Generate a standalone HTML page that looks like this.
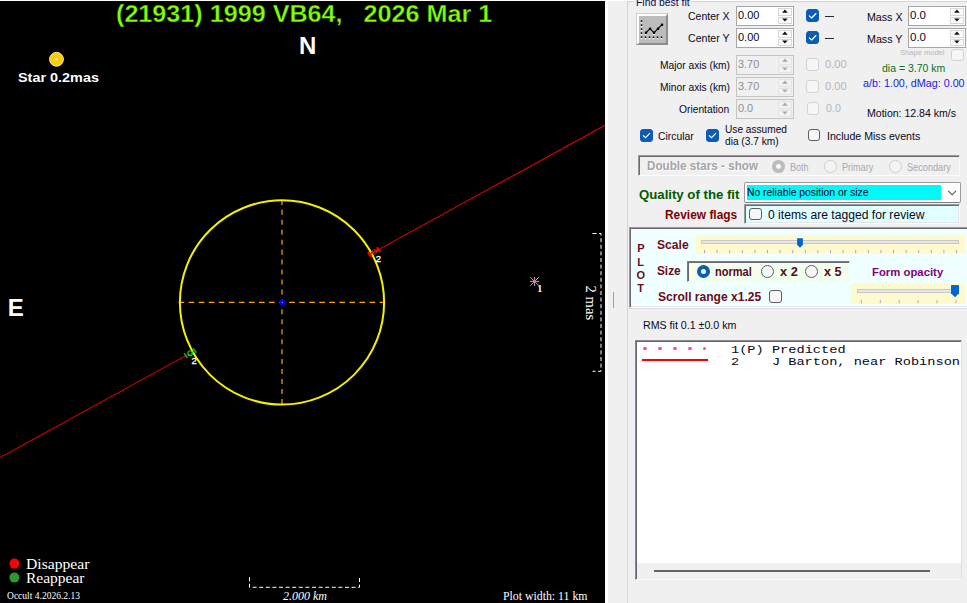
<!DOCTYPE html>
<html><head><meta charset="utf-8"><title>Occult asteroid plot</title>
<style>
html,body{margin:0;padding:0;}
body{width:967px;height:603px;overflow:hidden;position:relative;background:#f0f0f0;font-family:"Liberation Sans",sans-serif;}
.t{position:absolute;white-space:pre;line-height:normal;}
.a{position:absolute;box-sizing:border-box;}
#plot{position:absolute;left:0;top:0;}
.num{background:#fff;border:1px solid #a6a6aa;}
.num.dis{background:#f0f0f0;border-color:#c4c4c4;}
.spin{position:absolute;right:0;top:0;bottom:0;width:16px;background:#f3f3f3;border-left:1px solid #e0e0e0;}
.cb{border:1px solid #5c5c64;border-radius:3px;background:#f7f7f7;}
.cb.on{background:#0a5cb4;border-color:#0a5cb4;}
.cb.dis{border-color:#d2d2d2;background:#f6f6f6;}
.rb{border:1px solid #606068;border-radius:50%;background:#f6f6f6;}
.rb.dis{border-color:#cfcfcf;background:#f4f4f4;}

</style></head>
<body>
<svg id="plot" width="608" height="603" viewBox="0 0 608 603">
  <rect x="0" y="0" width="608" height="603" fill="#fff"/>
  <rect x="0" y="1" width="605" height="602" fill="#000"/>
  <!-- chord line -->
  <line x1="0" y1="457.6" x2="188.6" y2="354.1" stroke="#e40000" stroke-width="1.05"/>
  <line x1="379" y1="249.4" x2="605" y2="125.3" stroke="#e40000" stroke-width="1.05"/>
  <!-- axes -->
  <line x1="282" y1="199.9" x2="282" y2="405" stroke="#b07808" stroke-width="1.7" stroke-dasharray="5 4.95"/>
  <line x1="178.6" y1="302.4" x2="385" y2="302.4" stroke="#ffa800" stroke-width="1.2" stroke-dasharray="5.6 4.45"/>
  <!-- circle -->
  <circle cx="282" cy="302.4" r="102.1" fill="none" stroke="#f4f000" stroke-width="2"/>
  <circle cx="282.3" cy="302.4" r="2.9" fill="#0000ff"/>
  <circle cx="282.3" cy="302.4" r="0.8" fill="#8060c0"/>
  <!-- D event -->
  <g stroke="#ff0000" stroke-width="2" fill="none">
    <line x1="369.9" y1="254.1" x2="378.5" y2="249.7"/>
    <line x1="367.9" y1="252.1" x2="371.4" y2="256.9"/>
    <line x1="376.9" y1="247.3" x2="380.3" y2="252.3"/>
  </g>
  <circle cx="374.4" cy="251.9" r="2.4" fill="none" stroke="#a06858" stroke-width="1" stroke-dasharray="1.2 0.8"/>
  <!-- R event -->
  <g stroke="#10a02c" stroke-width="1.7" fill="none">
    <line x1="184.1" y1="353.2" x2="187.5" y2="358"/>
    <line x1="193.1" y1="348.3" x2="196.3" y2="352.7"/>
  </g>
  <line x1="188.5" y1="355.3" x2="194.5" y2="351" stroke="#10a02c" stroke-width="1"/>
  <circle cx="190.2" cy="353.3" r="2.3" fill="none" stroke="#00d828" stroke-width="1.1"/>
  <!-- predicted star marker -->
  <g stroke="#c8c8c8" stroke-width="0.9">
    <line x1="530" y1="281.4" x2="539.2" y2="281.4"/>
    <line x1="534.6" y1="276.8" x2="534.6" y2="286"/>
    <line x1="530.3" y1="277.1" x2="538.9" y2="285.7"/>
    <line x1="530.3" y1="285.7" x2="538.9" y2="277.1"/>
  </g>
  <circle cx="534.6" cy="281.4" r="1.7" fill="#ff60b0"/>
  <!-- star -->
  <circle cx="56.5" cy="59.3" r="6.9" fill="#ffcc00" stroke="#fff2c0" stroke-width="1"/>
  <circle cx="56.5" cy="59.3" r="1.3" fill="#fff"/>
  <!-- legend dots -->
  <circle cx="14.4" cy="563.6" r="5" fill="#ff0000"/>
  <circle cx="14.4" cy="577.6" r="5" fill="#2e962e"/>
  <!-- km scale -->
  <path d="M249.5 577.2 V587.3 H359.5 V577.2" fill="none" stroke="#fff" stroke-width="1" stroke-dasharray="4 2.6"/>
  <!-- mas scale -->
  <path d="M592.5 233.5 H601 V371.3 H592.5" fill="none" stroke="#fff" stroke-width="1" stroke-dasharray="4 2.6"/>
  <text x="0" y="0" transform="translate(586.2,285.6) rotate(90)" font-family="Liberation Serif, serif" font-size="15" textLength="34.6" lengthAdjust="spacingAndGlyphs" fill="#fff">2 mas</text>
</svg>
<!-- ===== panel ===== -->
<div class="a" style="left:0;top:0;width:967px;height:1px;background:#fff"></div>
<!-- groupbox border -->
<div class="a" style="left:627px;top:1px;width:345px;height:330px;border:1px solid #d4d4d4;border-bottom:none"></div>
<div class="a" style="left:627px;top:331px;width:1px;height:272px;background:#d8d8d8"></div>
<div class="a" style="left:634px;top:0;width:57px;height:8px;background:#f0f0f0"></div>
<div class="a" style="left:613px;top:292px;width:1px;height:16px;background:#a0a0a0"></div>
<!-- fit button -->
<div class="a" id="fitbtn" style="left:636px;top:13px;width:32px;height:32px;background:#bcbcbc;border-top:3px solid #fff;border-left:3px solid #fff;border-right:2px solid #8a8a8a;border-bottom:2px solid #8a8a8a;outline:1px solid rgba(150,150,150,.45);outline-offset:-1px">
<svg width="28" height="28" viewBox="0 0 28 28" style="position:absolute;left:-1px;top:-1px">
 <g fill="#fff"><rect x="2.8" y="6.7" width="1.5" height="1.5"/><rect x="2.8" y="10.7" width="1.5" height="1.5"/><rect x="2.8" y="14.7" width="1.5" height="1.5"/><rect x="2.8" y="18.7" width="1.5" height="1.5"/><rect x="2.8" y="22.7" width="1.5" height="1.5"/><rect x="6.8" y="22.8" width="1.5" height="1.5"/><rect x="10.8" y="22.8" width="1.5" height="1.5"/><rect x="14.8" y="22.8" width="1.5" height="1.5"/><rect x="18.8" y="22.8" width="1.5" height="1.5"/><rect x="22.8" y="22.8" width="1.5" height="1.5"/><rect x="6.9" y="18.3" width="2.3" height="1.6"/><rect x="14.9" y="18.3" width="2.3" height="1.6"/></g>
 <g fill="#000"><rect x="2.8" y="5.4" width="1.5" height="1.5"/><rect x="2.8" y="9.4" width="1.5" height="1.5"/><rect x="2.8" y="13.4" width="1.5" height="1.5"/><rect x="2.8" y="17.4" width="1.5" height="1.5"/><rect x="2.8" y="21.4" width="1.5" height="1.5"/><rect x="6.8" y="21.5" width="1.5" height="1.5"/><rect x="10.8" y="21.5" width="1.5" height="1.5"/><rect x="14.8" y="21.5" width="1.5" height="1.5"/><rect x="18.8" y="21.5" width="1.5" height="1.5"/><rect x="22.8" y="21.5" width="1.5" height="1.5"/></g>
 <polyline points="8,17.7 12,13.7 16,17.7 20,13.7 24,9.7" fill="none" stroke="#000" stroke-width="1.1"/>
 <g fill="#000"><rect x="6.9" y="16.6" width="2.3" height="2.3"/><rect x="10.9" y="12.6" width="2.3" height="2.3"/><rect x="14.9" y="16.6" width="2.3" height="2.3"/><rect x="18.9" y="12.6" width="2.3" height="2.3"/><rect x="22.9" y="8.6" width="2.3" height="2.3"/></g>
</svg></div>
<div class="a num" style="left:736px;top:6px;width:58px;height:19.5px"><div class="a" style="left:40.8px;top:1.2px;width:14.4px;height:7.8px;background:#fcfcfc;border:1px solid #d8d8d8"></div><div class="a" style="left:40.8px;top:9.6px;width:14.4px;height:7.5px;background:#fcfcfc;border:1px solid #d8d8d8"></div><svg class="a" style="left:43.8px;top:-1px" width="8" height="19.5" viewBox="0 0 8 19.5"><path d="M1.1 6.73 L6.7 6.73 L3.9 3.53 Z M1.1 12.38 L6.7 12.38 L3.9 15.58 Z" fill="#101010"/></svg></div>
<div class="a num" style="left:736px;top:28px;width:58px;height:19.5px"><div class="a" style="left:40.8px;top:1.2px;width:14.4px;height:7.8px;background:#fcfcfc;border:1px solid #d8d8d8"></div><div class="a" style="left:40.8px;top:9.6px;width:14.4px;height:7.5px;background:#fcfcfc;border:1px solid #d8d8d8"></div><svg class="a" style="left:43.8px;top:-1px" width="8" height="19.5" viewBox="0 0 8 19.5"><path d="M1.1 6.73 L6.7 6.73 L3.9 3.53 Z M1.1 12.38 L6.7 12.38 L3.9 15.58 Z" fill="#101010"/></svg></div>
<div class="a num dis" style="left:736px;top:55px;width:58px;height:19.5px"><div class="a" style="left:40.8px;top:1.2px;width:14.4px;height:7.8px;background:#f2f2f2;border:1px solid #e4e4e4"></div><div class="a" style="left:40.8px;top:9.6px;width:14.4px;height:7.5px;background:#f2f2f2;border:1px solid #e4e4e4"></div><svg class="a" style="left:43.8px;top:-1px" width="8" height="19.5" viewBox="0 0 8 19.5"><path d="M1.1 6.73 L6.7 6.73 L3.9 3.53 Z M1.1 12.38 L6.7 12.38 L3.9 15.58 Z" fill="#a8a8a8"/></svg></div>
<div class="a num dis" style="left:736px;top:77px;width:58px;height:19.5px"><div class="a" style="left:40.8px;top:1.2px;width:14.4px;height:7.8px;background:#f2f2f2;border:1px solid #e4e4e4"></div><div class="a" style="left:40.8px;top:9.6px;width:14.4px;height:7.5px;background:#f2f2f2;border:1px solid #e4e4e4"></div><svg class="a" style="left:43.8px;top:-1px" width="8" height="19.5" viewBox="0 0 8 19.5"><path d="M1.1 6.73 L6.7 6.73 L3.9 3.53 Z M1.1 12.38 L6.7 12.38 L3.9 15.58 Z" fill="#a8a8a8"/></svg></div>
<div class="a num dis" style="left:736px;top:99px;width:58px;height:19.5px"><div class="a" style="left:40.8px;top:1.2px;width:14.4px;height:7.8px;background:#f2f2f2;border:1px solid #e4e4e4"></div><div class="a" style="left:40.8px;top:9.6px;width:14.4px;height:7.5px;background:#f2f2f2;border:1px solid #e4e4e4"></div><svg class="a" style="left:43.8px;top:-1px" width="8" height="19.5" viewBox="0 0 8 19.5"><path d="M1.1 6.73 L6.7 6.73 L3.9 3.53 Z M1.1 12.38 L6.7 12.38 L3.9 15.58 Z" fill="#a8a8a8"/></svg></div>
<div class="a num" style="left:908px;top:6px;width:58px;height:19.5px"><div class="a" style="left:40.8px;top:1.2px;width:14.4px;height:7.8px;background:#fcfcfc;border:1px solid #d8d8d8"></div><div class="a" style="left:40.8px;top:9.6px;width:14.4px;height:7.5px;background:#fcfcfc;border:1px solid #d8d8d8"></div><svg class="a" style="left:43.8px;top:-1px" width="8" height="19.5" viewBox="0 0 8 19.5"><path d="M1.1 6.73 L6.7 6.73 L3.9 3.53 Z M1.1 12.38 L6.7 12.38 L3.9 15.58 Z" fill="#101010"/></svg></div>
<div class="a num" style="left:908px;top:28px;width:58px;height:19.5px"><div class="a" style="left:40.8px;top:1.2px;width:14.4px;height:7.8px;background:#fcfcfc;border:1px solid #d8d8d8"></div><div class="a" style="left:40.8px;top:9.6px;width:14.4px;height:7.5px;background:#fcfcfc;border:1px solid #d8d8d8"></div><svg class="a" style="left:43.8px;top:-1px" width="8" height="19.5" viewBox="0 0 8 19.5"><path d="M1.1 6.73 L6.7 6.73 L3.9 3.53 Z M1.1 12.38 L6.7 12.38 L3.9 15.58 Z" fill="#101010"/></svg></div>
<div class="a" style="left:825.3px;top:15.8px;width:8.3px;height:1.1px;background:#282830"></div>
<div class="a" style="left:825.3px;top:37.8px;width:8.3px;height:1.1px;background:#282830"></div>
<div class="a cb on" style="left:806px;top:9px;width:13px;height:13px"><svg class="a" style="left:-1px;top:-1px" width="13" height="13" viewBox="0 0 13 13"><path d="M3.3 6.8 L5.7 9 L9.9 4.5" fill="none" stroke="#fff" stroke-width="1.15" stroke-linecap="round" stroke-linejoin="round"/></svg></div>
<div class="a cb on" style="left:806px;top:31px;width:13px;height:13px"><svg class="a" style="left:-1px;top:-1px" width="13" height="13" viewBox="0 0 13 13"><path d="M3.3 6.8 L5.7 9 L9.9 4.5" fill="none" stroke="#fff" stroke-width="1.15" stroke-linecap="round" stroke-linejoin="round"/></svg></div>
<div class="a cb dis" style="left:806.3px;top:58.4px;width:12.6px;height:12.4px"></div>
<div class="a cb dis" style="left:806.3px;top:80.4px;width:12.6px;height:12.4px"></div>
<div class="a cb dis" style="left:806.5px;top:102.4px;width:12.6px;height:12.4px"></div>
<div class="a cb dis" style="left:951.3px;top:49px;width:12.6px;height:11.6px"></div>
<div class="a cb on" style="left:640px;top:129.3px;width:12.8px;height:12.6px"><svg class="a" style="left:-1px;top:-1px" width="12.8" height="12.6" viewBox="0 0 13 13"><path d="M3.3 6.8 L5.7 9 L9.9 4.5" fill="none" stroke="#fff" stroke-width="1.15" stroke-linecap="round" stroke-linejoin="round"/></svg></div>
<div class="a cb on" style="left:706.2px;top:129.3px;width:12.8px;height:12.6px"><svg class="a" style="left:-1px;top:-1px" width="12.8" height="12.6" viewBox="0 0 13 13"><path d="M3.3 6.8 L5.7 9 L9.9 4.5" fill="none" stroke="#fff" stroke-width="1.15" stroke-linecap="round" stroke-linejoin="round"/></svg></div>
<div class="a cb" style="left:808.1px;top:129.4px;width:12.4px;height:12px"></div>
<div class="a" style="left:638.4px;top:155.4px;width:321.8px;height:20.4px;border-top:1px solid #9a9a9e;border-left:1px solid #9a9a9e;border-right:1px solid #fcfcfc;border-bottom:1px solid #fcfcfc;box-shadow:inset 1px 1px 0 #6e6672"></div>
<div class="a" style="left:772.1px;top:160.1px;width:12.8px;height:12.8px;border-radius:50%;background:#bcbcbc"></div>
<div class="a" style="left:776.1px;top:164.1px;width:4.8px;height:4.8px;border-radius:50%;background:#fafafa"></div>
<div class="a rb dis" style="left:824.1px;top:160.2px;width:12.6px;height:12.6px"></div>
<div class="a rb dis" style="left:889.1px;top:160.2px;width:12.6px;height:12.6px"></div>
<div class="a" style="left:744.2px;top:182.2px;width:216.5px;height:20.6px;background:#fff;border:1px solid #9a9aa0;border-bottom-color:#7c7c84;border-radius:2px"></div>
<div class="a" style="left:747.1px;top:184.9px;width:193.8px;height:15.1px;background:#00fafa"></div>
<svg class="a" style="left:945px;top:188px" width="14" height="10" viewBox="0 0 14 10"><path d="M3.2 2.8 L7.1 6.8 L11 2.8" fill="none" stroke="#50505a" stroke-width="1.1"/></svg>
<div class="a" style="left:744.3px;top:204.3px;width:216.2px;height:19.4px;background:#e0ffff;border-top:1px solid #9a9a9e;border-left:1px solid #9a9a9e;border-right:1px solid #fcfcfc;border-bottom:1px solid #fcfcfc;box-shadow:inset 1px 1px 0 #6e6672, inset -1px -1px 0 #e6e6e8"></div>
<div class="a cb" style="left:749.1px;top:208.2px;width:12.6px;height:12.3px"></div>
<div class="a" style="left:629.2px;top:226.6px;width:340px;height:81px;background:#f0ffff;border-top:1px solid #9a9a9e;border-left:1px solid #9a9a9e;border-bottom:1px solid #fdfdfd;box-shadow:inset 1px 1px 0 #6e6672, inset 0 -1px 0 #e6e6e8"></div>
<div class="a" style="left:629px;top:308.4px;width:340px;height:1px;background:#dcdce0"></div>
<div class="a" style="left:696.1px;top:235.3px;width:269px;height:18.6px;background:#fffacd"></div>
<div class="a" style="left:701.2px;top:240.3px;width:258px;height:3.5px;background:#e6e6ea;border:1px solid #c8c8cc"></div>
<div class="a" style="left:851.3px;top:283.2px;width:113.8px;height:20.5px;background:#fffacd"></div>
<div class="a" style="left:857px;top:289.2px;width:99px;height:3.5px;background:#e6e6ea;border:1px solid #c8c8cc"></div>
<div class="a" style="left:687.3px;top:260.5px;width:162.6px;height:21.9px;background:#f2ffec;border-top:1px solid #80788a;border-left:1px solid #80788a;border-right:1px solid #f6f6f6;border-bottom:1px solid #f6f6f6;box-shadow:inset 1px 1px 0 #6e6672"></div>
<div class="a" style="left:697.2px;top:265.0px;width:13.0px;height:13.0px;border-radius:50%;background:#0a5cb4"></div>
<div class="a" style="left:701.2px;top:269.0px;width:5px;height:5px;border-radius:50%;background:#fff"></div>
<div class="a rb" style="left:761.0px;top:265.1px;width:12.8px;height:12.8px"></div>
<div class="a rb" style="left:805.2px;top:265.1px;width:12.8px;height:12.8px"></div>
<div class="a cb" style="left:769.1px;top:290.4px;width:12.7px;height:12.2px"></div>
<div class="a" style="left:635.1px;top:339.6px;width:326.9px;height:240.4px;border-top:1px solid #8c8890;border-left:1px solid #8c8890;border-right:1px solid #e0e0e4;border-bottom:1px solid #fbfbfb;box-shadow:inset 1px 1px 0 #6a6270"></div>
<div class="a" style="left:637px;top:341.5px;width:324px;height:221.5px;background:#fff"></div>
<div class="a" style="left:654px;top:570px;width:275.6px;height:2px;background:#626268"></div>
<div class="a" style="left:642.80px;top:346.7px;width:3.8px;height:3.8px;border-radius:50%;background:#ff48b0"></div>
<div class="a" style="left:657.77px;top:346.7px;width:3.8px;height:3.8px;border-radius:50%;background:#ff48b0"></div>
<div class="a" style="left:672.74px;top:346.7px;width:3.8px;height:3.8px;border-radius:50%;background:#ff48b0"></div>
<div class="a" style="left:687.71px;top:346.7px;width:3.8px;height:3.8px;border-radius:50%;background:#ff48b0"></div>
<div class="a" style="left:702.68px;top:346.7px;width:3.8px;height:3.8px;border-radius:50%;background:#ff48b0"></div>
<div class="a" style="left:641.9px;top:358.7px;width:66.2px;height:2.3px;background:#ff0000"></div>
<svg class="a" style="left:0;top:0" width="967" height="603" viewBox="0 0 967 603"><g fill="#b4a2bc"><rect x="704.00" y="250" width="1" height="3.2"/><rect x="716.60" y="250" width="1" height="3.2"/><rect x="729.20" y="250" width="1" height="3.2"/><rect x="741.80" y="250" width="1" height="3.2"/><rect x="754.40" y="250" width="1" height="3.2"/><rect x="767.00" y="250" width="1" height="3.2"/><rect x="779.60" y="250" width="1" height="3.2"/><rect x="792.20" y="250" width="1" height="3.2"/><rect x="804.80" y="250" width="1" height="3.2"/><rect x="817.40" y="250" width="1" height="3.2"/><rect x="830.00" y="250" width="1" height="3.2"/><rect x="842.60" y="250" width="1" height="3.2"/><rect x="855.20" y="250" width="1" height="3.2"/><rect x="867.80" y="250" width="1" height="3.2"/><rect x="880.40" y="250" width="1" height="3.2"/><rect x="893.00" y="250" width="1" height="3.2"/><rect x="905.60" y="250" width="1" height="3.2"/><rect x="918.20" y="250" width="1" height="3.2"/><rect x="930.80" y="250" width="1" height="3.2"/><rect x="943.40" y="250" width="1" height="3.2"/><rect x="956.00" y="250" width="1" height="3.2"/><rect x="860.90" y="300.1" width="1" height="3.1"/><rect x="879.80" y="300.1" width="1" height="3.1"/><rect x="898.70" y="300.1" width="1" height="3.1"/><rect x="917.60" y="300.1" width="1" height="3.1"/><rect x="936.50" y="300.1" width="1" height="3.1"/><rect x="955.40" y="300.1" width="1" height="3.1"/></g><path d="M797.1 238.7 Q797.1 238.2 797.6 238.2 H802.4 Q802.9 238.2 802.9 238.7 V244.7 L800 247.7 L797.1 244.7 Z" fill="#0064d2"/><path d="M951 285.8 Q951 285 951.8 285 H958.2 Q959 285 959 285.8 V293.2 L955 297.2 L951 293.2 Z" fill="#0064d2"/></svg>

<span class="t" style="left:116.0px;top:1px;font:normal bold 23.5px 'Liberation Sans', sans-serif;color:#7fff00;transform:scaleX(1.0705);transform-origin:0 0;-webkit-text-stroke:0.35px #000;">(21931) 1999 VB64,   2026 Mar 1</span>
<span class="t" style="left:299.0px;top:32px;font:normal bold 24px 'Liberation Sans', sans-serif;color:#fff;">N</span>
<span class="t" style="left:7.8px;top:294px;font:normal bold 24px 'Liberation Sans', sans-serif;color:#fff;">E</span>
<span class="t" style="left:18.0px;top:70px;font:normal bold 13px 'Liberation Sans', sans-serif;color:#fff;transform:scaleX(1.1096);transform-origin:0 0;">Star 0.2mas</span>
<span class="t" style="left:26.0px;top:557px;font:normal normal 14px 'Liberation Serif', serif;color:#fff;transform:scaleX(1.1186);transform-origin:0 0;">Disappear</span>
<span class="t" style="left:26.0px;top:571px;font:normal normal 14px 'Liberation Serif', serif;color:#fff;transform:scaleX(1.1067);transform-origin:0 0;">Reappear</span>
<span class="t" style="left:7.0px;top:590px;font:normal normal 10px 'Liberation Serif', serif;color:#fff;transform:scaleX(0.9523);transform-origin:0 0;">Occult 4.2026.2.13</span>
<span class="t" style="left:283.0px;top:589px;font:italic normal 12px 'Liberation Serif', serif;color:#fff;transform:scaleX(1.0000);transform-origin:0 0;">2.000 km</span>
<span class="t" style="left:503.0px;top:589px;font:normal normal 12px 'Liberation Serif', serif;color:#fff;transform:scaleX(0.9836);transform-origin:0 0;">Plot width: 11 km</span>
<span class="t" style="left:375.8px;top:253px;font:normal normal 9.5px 'Liberation Sans', sans-serif;color:#fff;-webkit-text-stroke:0.3px #fff;">2</span>
<span class="t" style="left:191.6px;top:355px;font:normal normal 9.5px 'Liberation Sans', sans-serif;color:#fff;-webkit-text-stroke:0.3px #fff;">2</span>
<span class="t" style="left:537.2px;top:283px;font:normal bold 10px 'Liberation Serif', serif;color:#fff;">1</span>
<span class="t" style="left:636.0px;top:-4px;font:normal normal 11px 'Liberation Sans', sans-serif;color:#08084c;transform:scaleX(0.9427);transform-origin:0 0;">Find best fit</span>
<span class="t" style="left:688.0px;top:10px;font:normal normal 11px 'Liberation Sans', sans-serif;color:#08081c;transform:scaleX(0.9557);transform-origin:0 0;">Center X</span>
<span class="t" style="left:688.0px;top:32px;font:normal normal 11px 'Liberation Sans', sans-serif;color:#08081c;transform:scaleX(0.9602);transform-origin:0 0;">Center Y</span>
<span class="t" style="left:660.0px;top:59px;font:normal normal 11px 'Liberation Sans', sans-serif;color:#08081c;transform:scaleX(0.9312);transform-origin:0 0;">Major axis (km)</span>
<span class="t" style="left:660.0px;top:81px;font:normal normal 11px 'Liberation Sans', sans-serif;color:#08081c;transform:scaleX(0.9312);transform-origin:0 0;">Minor axis (km)</span>
<span class="t" style="left:678.5px;top:103px;font:normal normal 11px 'Liberation Sans', sans-serif;color:#08081c;transform:scaleX(0.9329);transform-origin:0 0;">Orientation</span>
<span class="t" style="left:738.0px;top:9px;font:normal normal 11px 'Liberation Sans', sans-serif;color:#08081c;transform:scaleX(0.9990);transform-origin:0 0;">0.00</span>
<span class="t" style="left:738.0px;top:31px;font:normal normal 11px 'Liberation Sans', sans-serif;color:#08081c;transform:scaleX(0.9990);transform-origin:0 0;">0.00</span>
<span class="t" style="left:738.2px;top:58px;font:normal normal 11px 'Liberation Sans', sans-serif;color:#8e8e98;transform:scaleX(0.9896);transform-origin:0 0;">3.70</span>
<span class="t" style="left:738.2px;top:80px;font:normal normal 11px 'Liberation Sans', sans-serif;color:#8e8e98;transform:scaleX(0.9896);transform-origin:0 0;">3.70</span>
<span class="t" style="left:738.2px;top:102px;font:normal normal 11px 'Liberation Sans', sans-serif;color:#8e8e98;transform:scaleX(0.9937);transform-origin:0 0;">0.0</span>
<span class="t" style="left:824.8px;top:58px;font:normal normal 11px 'Liberation Sans', sans-serif;color:#b4b4bc;transform:scaleX(1.0083);transform-origin:0 0;">0.00</span>
<span class="t" style="left:824.8px;top:80px;font:normal normal 11px 'Liberation Sans', sans-serif;color:#b4b4bc;transform:scaleX(1.0083);transform-origin:0 0;">0.00</span>
<span class="t" style="left:825.5px;top:102px;font:normal normal 11px 'Liberation Sans', sans-serif;color:#b4b4bc;transform:scaleX(0.9675);transform-origin:0 0;">0.0</span>
<span class="t" style="left:867.0px;top:11px;font:normal normal 11px 'Liberation Sans', sans-serif;color:#08081c;transform:scaleX(0.9676);transform-origin:0 0;">Mass X</span>
<span class="t" style="left:867.0px;top:33px;font:normal normal 11px 'Liberation Sans', sans-serif;color:#08081c;transform:scaleX(0.9730);transform-origin:0 0;">Mass Y</span>
<span class="t" style="left:909.8px;top:9px;font:normal normal 11px 'Liberation Sans', sans-serif;color:#08081c;transform:scaleX(1.0460);transform-origin:0 0;">0.0</span>
<span class="t" style="left:909.8px;top:31px;font:normal normal 11px 'Liberation Sans', sans-serif;color:#08081c;transform:scaleX(1.0460);transform-origin:0 0;">0.0</span>
<span class="t" style="left:900.0px;top:48px;font:normal normal 7.5px 'Liberation Sans', sans-serif;color:#b8b8b8;transform:scaleX(1.0067);transform-origin:0 0;">Shape model</span>
<span class="t" style="left:882.0px;top:62px;font:normal normal 11px 'Liberation Sans', sans-serif;color:#087020;transform:scaleX(0.9526);transform-origin:0 0;">dia = 3.70 km</span>
<span class="t" style="left:863.4px;top:77px;font:normal normal 11px 'Liberation Sans', sans-serif;color:#1818f0;transform:scaleX(0.9772);transform-origin:0 0;">a/b: 1.00, dMag: 0.00</span>
<span class="t" style="left:867.2px;top:107px;font:normal normal 11px 'Liberation Sans', sans-serif;color:#08081c;transform:scaleX(0.9576);transform-origin:0 0;">Motion: 12.84 km/s</span>
<span class="t" style="left:658.4px;top:130px;font:normal normal 11px 'Liberation Sans', sans-serif;color:#08081c;transform:scaleX(0.9444);transform-origin:0 0;">Circular</span>
<span class="t" style="left:725.4px;top:123px;font:normal normal 11px 'Liberation Sans', sans-serif;color:#08081c;transform:scaleX(0.9217);transform-origin:0 0;">Use assumed</span>
<span class="t" style="left:725.4px;top:135px;font:normal normal 11px 'Liberation Sans', sans-serif;color:#08081c;transform:scaleX(0.9229);transform-origin:0 0;">dia (3.7 km)</span>
<span class="t" style="left:827.2px;top:130px;font:normal normal 11px 'Liberation Sans', sans-serif;color:#08081c;transform:scaleX(0.9647);transform-origin:0 0;">Include Miss events</span>
<span class="t" style="left:647.6px;top:160px;font:normal bold 12px 'Liberation Sans', sans-serif;color:#fff;transform:scaleX(0.9734);transform-origin:0 0;">Double stars - show</span>
<span class="t" style="left:646.6px;top:159px;font:normal bold 12px 'Liberation Sans', sans-serif;color:#a4a4a8;transform:scaleX(0.9734);transform-origin:0 0;">Double stars - show</span>
<span class="t" style="left:790.2px;top:162px;font:normal normal 10px 'Liberation Sans', sans-serif;color:#a8a8b0;transform:scaleX(0.9039);transform-origin:0 0;">Both</span>
<span class="t" style="left:842.4px;top:162px;font:normal normal 10px 'Liberation Sans', sans-serif;color:#a8a8b0;transform:scaleX(0.9056);transform-origin:0 0;">Primary</span>
<span class="t" style="left:906.8px;top:162px;font:normal normal 10px 'Liberation Sans', sans-serif;color:#a8a8b0;transform:scaleX(0.9161);transform-origin:0 0;">Secondary</span>
<span class="t" style="left:638.6px;top:188px;font:normal bold 12px 'Liberation Sans', sans-serif;color:#005a00;transform:scaleX(1.0991);transform-origin:0 0;">Quality of the fit</span>
<span class="t" style="left:747.4px;top:186px;font:normal normal 11px 'Liberation Sans', sans-serif;color:#000028;transform:scaleX(0.9410);transform-origin:0 0;">No reliable position or size</span>
<span class="t" style="left:664.6px;top:208px;font:normal bold 12px 'Liberation Sans', sans-serif;color:#800000;transform:scaleX(0.9931);transform-origin:0 0;">Review flags</span>
<span class="t" style="left:768.3px;top:208px;font:normal normal 12px 'Liberation Sans', sans-serif;color:#08081c;transform:scaleX(1.0107);transform-origin:0 0;">0 items are tagged for review</span>
<span class="t" style="left:637.2px;top:242px;font:normal bold 11px 'Liberation Sans', sans-serif;color:#6a0c1c;">P</span>
<span class="t" style="left:637.2px;top:256px;font:normal bold 11px 'Liberation Sans', sans-serif;color:#6a0c1c;">L</span>
<span class="t" style="left:636.6px;top:269px;font:normal bold 11px 'Liberation Sans', sans-serif;color:#6a0c1c;">O</span>
<span class="t" style="left:637.2px;top:282px;font:normal bold 11px 'Liberation Sans', sans-serif;color:#6a0c1c;">T</span>
<span class="t" style="left:657.4px;top:238px;font:normal bold 12px 'Liberation Sans', sans-serif;color:#6a0c1c;transform:scaleX(1.0077);transform-origin:0 0;">Scale</span>
<span class="t" style="left:657.4px;top:264px;font:normal bold 12px 'Liberation Sans', sans-serif;color:#6a0c1c;transform:scaleX(0.9827);transform-origin:0 0;">Size</span>
<span class="t" style="left:658.0px;top:290px;font:normal bold 12px 'Liberation Sans', sans-serif;color:#6a0c1c;transform:scaleX(1.0045);transform-origin:0 0;">Scroll range x1.25</span>
<span class="t" style="left:715.4px;top:265px;font:normal bold 12px 'Liberation Sans', sans-serif;color:#580828;transform:scaleX(0.9196);transform-origin:0 0;">normal</span>
<span class="t" style="left:779.6px;top:265px;font:normal bold 12px 'Liberation Sans', sans-serif;color:#580828;transform:scaleX(1.0667);transform-origin:0 0;">x 2</span>
<span class="t" style="left:823.8px;top:265px;font:normal bold 12px 'Liberation Sans', sans-serif;color:#580828;transform:scaleX(1.0547);transform-origin:0 0;">x 5</span>
<span class="t" style="left:872.4px;top:266px;font:normal bold 11px 'Liberation Sans', sans-serif;color:#800080;transform:scaleX(1.0307);transform-origin:0 0;">Form opacity</span>
<span class="t" style="left:643.0px;top:319px;font:normal normal 11px 'Liberation Sans', sans-serif;color:#08081c;transform:scaleX(0.9677);transform-origin:0 0;">RMS fit 0.1 ±0.0 km</span>
<span class="t" style="left:731.4px;top:343px;font:normal normal 11.5px 'Liberation Mono', monospace;color:#080818;transform:scaleX(1.1860);transform-origin:0 0;">1(P) Predicted</span>
<span class="t" style="left:731.4px;top:355px;font:normal normal 11.5px 'Liberation Mono', monospace;color:#080818;transform:scaleX(1.1851);transform-origin:0 0;">2    J Barton, near Robinson</span>
</body></html>
